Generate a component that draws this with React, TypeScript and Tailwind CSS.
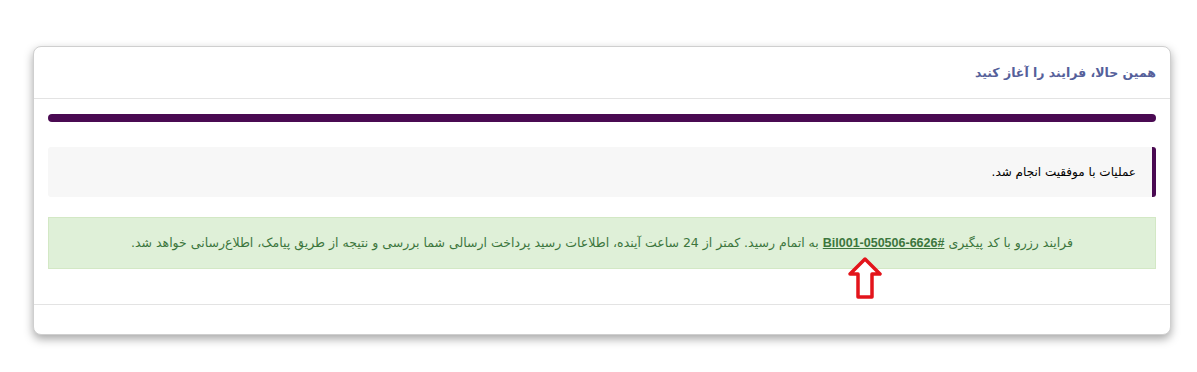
import React from "react";

export default function App() {
  return (
    <div className="w-[1197px] h-[372px] bg-white pt-[46px] pl-[33px]" style={{ fontFamily: '"DejaVu Sans", "Noto Sans", sans-serif' }}>
      <div dir="rtl" className="relative w-[1138px] h-[289px] bg-white border border-[#cfcfcf] rounded-[8px] shadow-[0_4px_10px_rgba(0,0,0,0.35)] flex flex-col">
        <div className="h-[52px] border-b border-[#e3e3e3] flex items-center px-[14px]">
          <h3 className="text-[12.5px] font-bold text-[#55609a] pt-[2px]">همین حالا، فرایند را آغاز کنید</h3>
        </div>
        <div className="px-[14px] pt-[15px] pb-[35px] border-b border-[#e3e3e3]">
          <div className="h-[8px] rounded-full bg-[#4a0a52]" />
          <div className="mt-[25px] h-[50px] bg-[#f7f7f7] border-r-[4px] border-[#4a0a52] rounded-[3px] flex items-center pr-[16px]">
            <span className="text-[12px] text-black">عملیات با موفقیت انجام شد.</span>
          </div>
          <div className="mt-[20px] h-[52px] bg-[#dff0d8] border border-[#d3e8c5] flex items-center justify-center">
            <span className="text-[12.5px] text-[#3c763d]">
              فرایند رزرو با کد پیگیری{" "}
              <a className="font-bold underline text-[#3c763d] text-[12.5px]" style={{ fontFamily: '"Liberation Sans", Arial, sans-serif' }} href="#">
                #Bil001-050506-6626
              </a>{" "}
              به اتمام رسید. کمتر از 24 ساعت آینده، اطلاعات رسید پرداخت ارسالی شما بررسی و نتیجه از طریق پیامک، اطلاع‌رسانی خواهد شد.
            </span>
          </div>
        </div>
        <svg className="absolute left-[813px] top-[210px]" width="36" height="43" viewBox="0 0 36 43">
          <path d="M18 2 L33 17 L25 17 L25 40 L11 40 L11 17 L3 17 Z" fill="white" stroke="#e3141b" strokeWidth="3.5" strokeLinejoin="round" />
        </svg>
      </div>
    </div>
  );
}
